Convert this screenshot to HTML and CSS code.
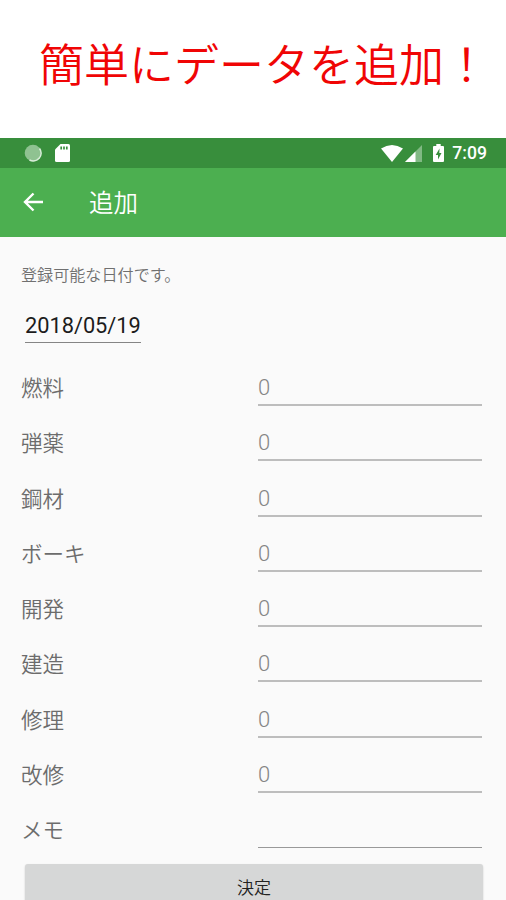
FILE: index.html
```html
<!DOCTYPE html>
<html lang="ja">
<head>
<meta charset="utf-8">
<title>追加</title>
<link rel="stylesheet" href="styles.css">
</head>
<body>
<h1 class="headline">簡単にデータを追加！</h1>
<div class="status">
  <svg class="spinner" width="18" height="18" viewBox="0 0 18 18"><circle cx="9" cy="9" r="8.300" fill="#8fc291"/><path d="M15.500 4.500A7.800 7.800 0 0 1 5.500 16" fill="none" stroke="#d9edda" stroke-width="1.600"/></svg>
  <svg class="sd" width="15" height="18" viewBox="0 0 15 18"><path fill="#fff" d="M5.500 0H13.500Q15 0 15 1.500V16.500Q15 18 13.500 18H1.500Q0 18 0 16.500V5.500Z"/><path stroke="#388e3c" stroke-width="1.700" d="M6.200 2.500V5.500M9 2.500V5.500M11.800 2.500V5.500"/></svg>
  <svg class="wifi" width="22" height="17" viewBox="0 0 22 17"><path fill="#fff" d="M0 3.500Q11-3.500 22 3.500L11 17Z"/></svg>
  <svg class="signal" width="17" height="17" viewBox="0 0 17 17"><path fill="#81b984" d="M17 0V17H0Z"/><path fill="#fff" d="M10.500 6.500V17H0Z"/></svg>
  <svg class="battery" width="11" height="18" viewBox="0 0 11 18"><path fill="#fff" d="M3.300 0H7.700V2H10Q11 2 11 3V17Q11 18 10 18H1Q0 18 0 17V3Q0 2 1 2H3.300Z"/><path fill="#388e3c" d="M6.500 4.500 2.700 11H5V15.500L8.500 9H6.300Z"/></svg>
  <span class="clock">7:09</span>
</div>
<header class="appbar">
  <svg class="back" width="21" height="20" viewBox="0 0 21 20"><path d="M20 10H2M10.500 1.500 2 10 10.500 18.500" fill="none" stroke="#fff" stroke-width="2.400"/></svg>
  <span class="title">追加</span>
</header>
<main class="form">
  <p class="note">登録可能な日付です。</p>
  <div class="date">2018/05/19</div>
  <div class="rows">
    <div class="row"><span class="label">燃料</span><span class="field">0</span></div>
    <div class="row"><span class="label">弾薬</span><span class="field">0</span></div>
    <div class="row"><span class="label">鋼材</span><span class="field">0</span></div>
    <div class="row"><span class="label">ボーキ</span><span class="field">0</span></div>
    <div class="row"><span class="label">開発</span><span class="field">0</span></div>
    <div class="row"><span class="label">建造</span><span class="field">0</span></div>
    <div class="row"><span class="label">修理</span><span class="field">0</span></div>
    <div class="row"><span class="label">改修</span><span class="field">0</span></div>
    <div class="row"><span class="label">メモ</span><span class="field memo"></span></div>
  </div>
  <button class="submit">決定</button>
</main>
</body>
</html>
```
FILE: styles.css
```css
* { box-sizing: border-box; }
body {
  margin: 0;
  height: 900px;
  overflow: hidden;
  background: #fafafa;
  font-family: Roboto, "Noto Sans CJK JP", sans-serif;
}
.headline {
  margin: 0;
  height: 138px;
  padding: 29px 0 0 39px;
  background: #fff;
  color: #f00505;
  font: 350 45px/68px "Noto Sans CJK JP", sans-serif;
  white-space: nowrap;
}
.status {
  height: 30px;
  padding: 0 19px 0 24px;
  display: flex;
  align-items: center;
  background: #388e3c;
}
.sd { margin-left: 13px; }
.wifi { margin-left: auto; }
.signal { margin-left: 2px; }
.battery { margin-left: 11px; }
.clock {
  margin-left: 8px;
  color: #fff;
  font-size: 17.600px;
  font-weight: 500;
  line-height: 30px;
}
.appbar {
  height: 69px;
  padding: 0 0 1px 23px;
  display: flex;
  align-items: center;
  background: #4caf50;
}
.title {
  margin: 0 0 0 45px;
  color: #fff;
  font: 350 24.500px/36px "Noto Sans CJK JP", sans-serif;
}
.form { padding: 25px 24px 0 21px; }
.note {
  margin: 0;
  color: #707070;
  font: 350 16.100px/25px "Noto Sans CJK JP", sans-serif;
}
.date {
  width: 116px;
  height: 40px;
  margin: 16px 0 0 4px;
  padding-top: 8px;
  border-bottom: 1px solid #858585;
  color: #1c1c1c;
  font-size: 21.800px;
  line-height: 30px;
  letter-spacing: -.02px;
  white-space: nowrap;
}
.rows { margin-top: 17px; }
.row {
  height: 55.300px;
  display: flex;
  justify-content: space-between;
}
.label {
  padding-top: 9px;
  color: #6c6c6c;
  font: 350 21.500px/36px "Noto Sans CJK JP", sans-serif;
}
.field {
  width: 224px;
  height: 46px;
  padding-top: 10px;
  border-bottom: 2px solid #bdbdbd;
  color: #858585;
  font-size: 22px;
  font-weight: 300;
  line-height: 36px;
}
.memo { border-bottom: 1px solid #999; }
.submit {
  display: block;
  width: 458px;
  height: 48px;
  margin: 6px 0 0 4px;
  padding: 0;
  border: 0;
  border-radius: 3px;
  background: #d6d7d7;
  box-shadow: 0 1px 2px rgba(0, 0, 0, .2);
  color: #222;
  font: 350 17px/44px Roboto, "Noto Sans CJK JP", sans-serif;
}
```
